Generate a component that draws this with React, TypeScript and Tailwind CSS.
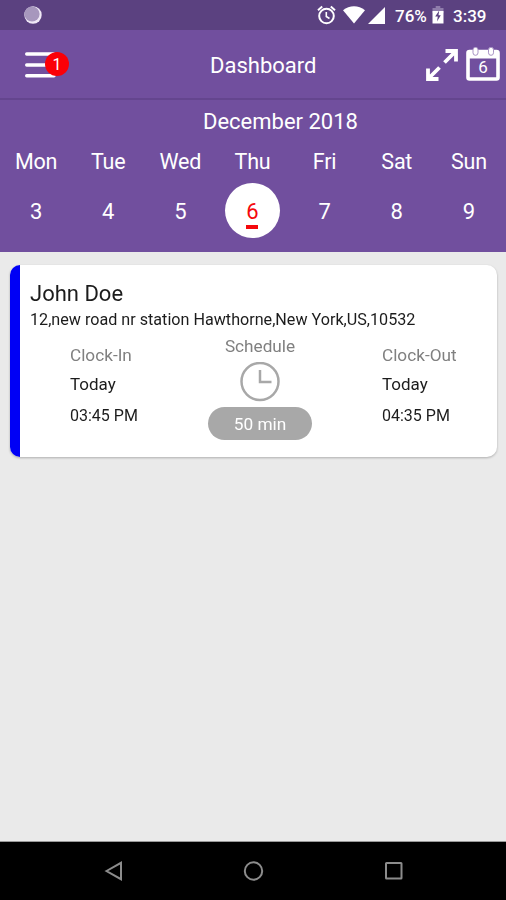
import React from "react";

const days = [
  { name: "Mon", date: 3 },
  { name: "Tue", date: 4 },
  { name: "Wed", date: 5 },
  { name: "Thu", date: 6 },
  { name: "Fri", date: 7 },
  { name: "Sat", date: 8 },
  { name: "Sun", date: 9 },
];
const TODAY = 6;

function StatusBar() {
  return (
    <div className="flex h-[30px] items-center bg-[#5b4180] pl-6 text-white">
      <svg width="18" height="18" viewBox="0 0 18 18">
        <circle cx="9" cy="9" r="8.7" fill="#efe8f6" />
        <circle cx="8" cy="8" r="7.6" fill="#a797bd" />
      </svg>
      <svg className="ml-[275px]" width="19" height="20" viewBox="0 0 19 20" fill="none" stroke="#fff" strokeWidth="2">
        <circle cx="9.5" cy="11" r="7.3" />
        <path d="M1 5.2 5.2 1.6M18 5.2 13.8 1.6" />
        <path d="M9.3 7v4.5l3.2 2" strokeWidth="1.6" />
      </svg>
      <svg className="ml-[7px]" width="22" height="18" viewBox="0 0 22 18">
        <path d="M0 4.2C6.5-1 15.5-1 22 4.2L11 17.6Z" fill="#fff" />
      </svg>
      <svg className="mt-px ml-[3px]" width="17" height="17" viewBox="0 0 17 17">
        <path d="M0 17 17 0V17Z" fill="#fff" />
      </svg>
      <span className="ml-[10px] w-[33px] pt-[2px] text-[17px] font-medium leading-none whitespace-nowrap">76%</span>
      <svg className="ml-[4px]" width="12" height="18" viewBox="0 0 12 18">
        <path d="M3.7 0h4.6v2H11.5v5H0.5V2h3.2Z" fill="#8f7dab" />
        <path d="M0.5 5h11v12.5h-11Z" fill="#fff" />
        <path d="M7.2 4.5 3.2 10.5h2.6L5 15.5 8.8 9.3H6.5Z" fill="#5b4180" />
      </svg>
      <span className="ml-[9px] pt-[2px] text-[17px] font-medium leading-none whitespace-nowrap">3:39</span>
    </div>
  );
}

function AppBar() {
  return (
    <div className="flex h-[70px] items-center border-b-2 border-[#64458e] bg-[#714f9e] pl-[25px] text-white">
      <div className="relative h-[27px] w-[45px]">
        <svg width="32" height="27" viewBox="0 0 32 27" stroke="#fff" strokeWidth="3.4" strokeLinecap="round">
          <path d="M1.7 3H29M1.7 14H29M1.7 24.8H29" />
        </svg>
        <span className="absolute top-[1px] left-[20px] flex h-[24px] w-[24px] items-center justify-center rounded-full bg-[#fb0007] pt-[2px] text-[16px] leading-none">
          1
        </span>
      </div>
      <h1 className="ml-[140px] w-[216px] pt-[4px] text-[22px] leading-7">Dashboard</h1>
      <svg className="mt-[2px]" width="32" height="32" viewBox="0 0 32 32" fill="none" stroke="#fff" strokeWidth="3.8">
        <path d="M18.5 13.5 29 3M19.5 2H30V12.5" />
        <path d="M13.5 18.5 3 29M2 19.5V30H12.5" />
      </svg>
      <svg className="ml-[8px]" width="34" height="34" viewBox="0 0 34 34">
        <rect x="2" y="4.5" width="30" height="27.5" rx="1.5" fill="none" stroke="#fff" strokeWidth="3.6" />
        <path d="M2 3.5h30V11.5H2Z" fill="#fff" />
        <rect x="7" y="0.3" width="5" height="8" rx="2.5" fill="#fff" stroke="#a893c4" strokeWidth="1" />
        <rect x="22.5" y="0.3" width="5" height="8" rx="2.5" fill="#fff" stroke="#a893c4" strokeWidth="1" />
        <text x="17" y="26" fill="#fff" fontSize="17" textAnchor="middle">6</text>
      </svg>
    </div>
  );
}

function WeekStrip() {
  return (
    <div className="h-[152px] bg-[#714f9e] text-[22px] text-white">
      <div className="pt-[8px] pl-[203px] leading-[28px]">December 2018</div>
      <div className="grid w-[505px] grid-cols-7 pt-[12px]">
        {days.map((d) => (
          <div key={d.name} className="flex flex-col items-center">
            <span className="h-[35px] text-[21.5px] leading-[28px] tracking-[-0.2px]">{d.name}</span>
            {d.date === TODAY ? (
              <span className="flex h-[55px] w-[55px] flex-col items-center rounded-full bg-white pt-[15px] text-[#f5080c]">
                <span className="h-[27px] leading-[28px]">{d.date}</span>
                <span className="h-[4px] w-[12px] bg-[#f5080c]" />
              </span>
            ) : (
              <span className="flex h-[55px] items-center pt-[2px] leading-[28px]">{d.date}</span>
            )}
          </div>
        ))}
      </div>
    </div>
  );
}

function ClockColumn({ label, time }: { label: string; time: string }) {
  return (
    <div className="flex flex-col items-start whitespace-nowrap text-[#1c1c1c]">
      <span className="h-[29px] text-[17.2px] leading-[25px] text-[#808080]">{label}</span>
      <span className="h-[32px] text-[17px] leading-6">Today</span>
      <span className="text-[16px] leading-6">{time}</span>
    </div>
  );
}

function VisitCard() {
  return (
    <div className="ml-[10px] flex h-[192px] w-[487px] overflow-hidden rounded-[10px] bg-white">
      <div className="w-[10px] bg-[#0000f5]" />
      <div className="flex-1 pt-[15px] pl-[10px]">
        <div className="text-[22px] leading-7 text-[#1c1c1c]">John Doe</div>
        <div className="text-[16.15px] leading-6 whitespace-nowrap text-[#1c1c1c]">
          12,new road nr station Hawthorne,New York,US,10532
        </div>
        <div className="flex pl-[40px]">
          <div className="w-[138px] pt-[11px]">
            <ClockColumn label="Clock-In" time="03:45 PM" />
          </div>
          <div className="flex w-[104px] flex-col items-center pt-[2px]">
            <span className="text-[17.2px] leading-6 text-[#808080]">Schedule</span>
            <svg className="mt-[4px]" width="40" height="40" viewBox="0 0 40 40" fill="none" stroke="#a8a8a8" strokeWidth="2.5">
              <circle cx="20" cy="19.500" r="18.500" />
              <path d="M20 8V20H31.500" />
            </svg>
            <span className="mt-[5px] flex h-[33px] w-[104px] items-center justify-center rounded-full bg-[#a8a8a8] pt-[2px] text-[17.3px] text-white">
              50 min
            </span>
          </div>
          <div className="ml-[70px] pt-[11px]">
            <ClockColumn label="Clock-Out" time="04:35 PM" />
          </div>
        </div>
      </div>
    </div>
  );
}

function NavBar() {
  return (
    <div className="flex h-[59px] items-center border-t border-[#999999] bg-black">
      <svg width="506" height="58" viewBox="0 0 506 58" fill="none" stroke="#8c8c8c" strokeWidth="2">
        <path d="M106.5 29 121 20.8V37.2Z" />
        <circle cx="253.5" cy="29" r="8.7" />
        <rect x="386" y="21" width="15.5" height="15.5" rx="0.5" />
      </svg>
    </div>
  );
}

export default function App() {
  return (
    <div className="flex h-[900px] w-[506px] flex-col overflow-hidden bg-[#eaeaea] font-['Roboto',sans-serif]">
      <StatusBar />
      <AppBar />
      <WeekStrip />
      <main className="flex-1 pt-[13px]">
        <div className="drop-shadow-[0_1px_1px_rgba(0,0,0,0.25)]">
          <VisitCard />
        </div>
      </main>
      <NavBar />
    </div>
  );
}
